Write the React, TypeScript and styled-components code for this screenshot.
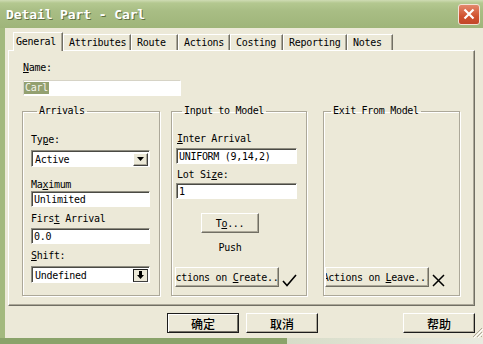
import React from "react";
import styled, { createGlobalStyle } from "styled-components";

const GlobalStyle = createGlobalStyle`
  html, body {
    margin: 0;
    padding: 0;
    background: #ece9d8;
  }
  body {
    font-family: "DejaVu Sans Mono", "Liberation Mono", monospace;
    font-size: 10px;
    letter-spacing: -0.3px;
    color: #000;
  }
`;

const Window = styled.div`
  width: 483px;
  height: 344px;
  display: flex;
  flex-direction: column;
  overflow: hidden;
  background: #a3b97e;
`;

const TitleBar = styled.div`
  height: 28px;
  flex: none;
  display: flex;
  align-items: center;
  justify-content: space-between;
  padding: 0 3px 0 6px;
  box-sizing: border-box;
  background: linear-gradient(
    to bottom,
    #cfdcb4 0,
    #b4c890 3px,
    #a8bd84 40%,
    #9fb57a 100%
  );
`;

const TitleText = styled.span`
  color: #fff;
  font-weight: bold;
  font-size: 13px;
  letter-spacing: -0.1px;
  text-shadow: 1px 1px 0 #5f7040;
`;

const CloseButton = styled.div`
  width: 22px;
  height: 21px;
  box-sizing: border-box;
  border: 1px solid #f3e2d6;
  border-radius: 3px;
  background: linear-gradient(to bottom, #e3886c, #d0522f 60%, #c2472a);
  display: flex;
  align-items: center;
  justify-content: center;
`;

const Body = styled.div`
  flex: 1;
  margin-left: 5px;
  background: #ece9d8;
  display: flex;
  flex-direction: column;
  padding: 4px 8px 0 3px;
  position: relative;
`;

const BottomEdge = styled.div`
  height: 6px;
  flex: none;
  background: linear-gradient(
    to right,
    #8aa36a 0,
    #8aa36a 287px,
    #d7dcc8 287px,
    #e9ebe0 100%
  );
`;

const TabStrip = styled.div`
  display: flex;
  align-items: flex-end;
  height: 18px;
  padding-left: 5px;
  position: relative;
  z-index: 1;
`;

const Tab = styled.div<{ $w: number; $active?: boolean }>`
  width: ${(p) => p.$w}px;
  height: ${(p) => (p.$active ? 19 : 16)}px;
  margin-bottom: ${(p) => (p.$active ? -1 : 0)}px;
  box-sizing: border-box;
  background: #ece9d8;
  border-top: 1px solid #fff;
  border-left: 1px solid #fff;
  border-right: 1px solid #716f64;
  box-shadow: inset -1px 0 #aca899;
  display: flex;
  align-items: center;
  padding-left: ${(p) => (p.$active ? 2 : 5)}px;
  padding-bottom: ${(p) => (p.$active ? 1 : 0)}px;
  white-space: nowrap;
`;

const Panel = styled.div`
  height: 256px;
  box-sizing: border-box;
  border-top: 1px solid #fff;
  border-left: 1px solid #fff;
  border-right: 1px solid #716f64;
  border-bottom: 1px solid #716f64;
  box-shadow: inset -1px -1px #aca899;
  padding: 11px 0 0 14px;
  display: flex;
  flex-direction: column;
`;

const FieldLabel = styled.div<{ $mt?: number; $ml?: number }>`
  margin-top: ${(p) => p.$mt ?? 0}px;
  margin-left: ${(p) => p.$ml ?? 0}px;
  height: 12px;
  line-height: 12px;
  white-space: nowrap;
`;

const TextBox = styled.div<{ $mt?: number; $w: number; $soft?: boolean }>`
  margin-top: ${(p) => p.$mt ?? 0}px;
  width: ${(p) => p.$w}px;
  height: 16px;
  box-sizing: border-box;
  background: #fff;
  border-top: 1px solid ${(p) => (p.$soft ? "#d6d3c6" : "#8e8c80")};
  border-left: 1px solid ${(p) => (p.$soft ? "#d6d3c6" : "#8e8c80")};
  border-bottom: 1px solid #fff;
  border-right: 1px solid #fff;
  box-shadow: ${(p) => (p.$soft ? "none" : "inset 1px 1px #4a4a44")};
  display: flex;
  align-items: center;
  padding-left: ${(p) => (p.$soft ? 0 : 2)}px;
  white-space: nowrap;
`;

const Selected = styled.span`
  background: #93a070;
  color: #f4f4ec;
  line-height: 12px;
  padding: 0 1px;
`;

const Combo = styled.div<{ $mt: number }>`
  margin-top: ${(p) => p.$mt}px;
  width: 119px;
  height: 17px;
  box-sizing: border-box;
  background: #fff;
  border-top: 1px solid #8e8c80;
  border-left: 1px solid #8e8c80;
  border-bottom: 1px solid #fff;
  border-right: 1px solid #fff;
  box-shadow: inset 1px 1px #4a4a44;
  display: flex;
  align-items: center;
  padding: 1px 1px 0 3px;
`;

const ComboText = styled.span`
  flex: 1;
`;

const ComboArrow = styled.div<{ $bold?: boolean }>`
  width: 15px;
  height: 13px;
  box-sizing: border-box;
  background: #ece9d8;
  border: 1px solid ${(p) => (p.$bold ? "#1a1a1a" : "#fff")};
  border-right-color: #404040;
  border-bottom-color: #404040;
  box-shadow: ${(p) => (p.$bold ? "none" : "inset -1px -1px #aca899")};
  display: flex;
  align-items: center;
  justify-content: center;
`;

const GroupRow = styled.div`
  display: flex;
  margin-top: 9px;
  margin-left: -1px;
`;

const Group = styled.fieldset<{ $w: number; $ml?: number; $pl: number }>`
  width: ${(p) => p.$w}px;
  height: 191px;
  box-sizing: border-box;
  margin: 0 0 0 ${(p) => p.$ml ?? 0}px;
  padding: 0 0 0 ${(p) => p.$pl}px;
  min-width: 0;
  border: 1px solid #aca899;
  box-shadow: inset 1px 1px #fff, 1px 1px #fff;
  display: flex;
  flex-direction: column;
`;

const Caption = styled.legend`
  margin-left: 6px;
  padding: 0 2px;
  height: 12px;
  line-height: 12px;
`;

const PushButton = styled.div<{ $mt?: number; $ml?: number; $w: number }>`
  margin-top: ${(p) => p.$mt ?? 0}px;
  margin-left: ${(p) => p.$ml ?? 0}px;
  width: ${(p) => p.$w}px;
  height: 20px;
  flex: none;
  box-sizing: border-box;
  background: #ece9d8;
  border-top: 1px solid #fff;
  border-left: 1px solid #fff;
  border-right: 1px solid #716f64;
  border-bottom: 1px solid #716f64;
  box-shadow: inset -1px -1px #aca899;
  display: flex;
  align-items: center;
  justify-content: center;
  overflow: hidden;
  white-space: nowrap;
`;

const ButtonCaption = styled.span`
  flex: none;
  white-space: pre;
`;

const Centered = styled.div<{ $mt: number; $ml: number; $w: number }>`
  margin-top: ${(p) => p.$mt}px;
  margin-left: ${(p) => p.$ml}px;
  width: ${(p) => p.$w}px;
  height: 12px;
  line-height: 12px;
  text-align: center;
`;

const ButtonLine = styled.div<{ $mt: number; $ml: number }>`
  margin-top: ${(p) => p.$mt}px;
  margin-left: ${(p) => p.$ml}px;
  display: flex;
  align-items: flex-end;
  gap: 3px;
`;

const DialogButtons = styled.div`
  display: flex;
  margin-top: 7px;
  padding-left: 159px;
  gap: 7px;
`;

const DialogButton = styled.div<{ $default?: boolean; $push?: boolean }>`
  width: 72px;
  height: 20px;
  box-sizing: border-box;
  margin-left: ${(p) => (p.$push ? "auto" : "0")};
  background: #ece9d8;
  border: 1px solid ${(p) => (p.$default ? "#1c1c1c" : "#fff")};
  border-right-color: #1c1c1c;
  border-bottom-color: #1c1c1c;
  box-shadow: ${(p) =>
    p.$default
      ? "inset 1px 1px #fff, inset -1px -1px #716f64"
      : "inset -1px -1px #aca899"};
  display: flex;
  align-items: center;
  justify-content: center;
  font-family: "Noto Sans CJK SC", sans-serif;
  font-size: 12px;
  font-weight: 500;
  letter-spacing: 0;
`;

const Grip = styled.svg`
  position: absolute;
  right: 0;
  bottom: 0;
`;

const Check = () => (
  <svg width="15" height="13" viewBox="0 0 15 13">
    <polyline points="1,7 5,11.5 14,1" fill="none" stroke="#000" strokeWidth="1.6" />
  </svg>
);

const Cross = () => (
  <svg width="13" height="13" viewBox="0 0 13 13">
    <path d="M1 1 L12 12 M12 1 L1 12" stroke="#000" strokeWidth="1.5" />
  </svg>
);

const SmallArrow = () => (
  <svg width="7" height="4" viewBox="0 0 7 4">
    <polygon points="0,0 7,0 3.5,4" fill="#000" />
  </svg>
);

const BoldArrow = () => (
  <svg width="7" height="8" viewBox="0 0 7 8">
    <rect x="2" y="0" width="3" height="4" fill="#000" />
    <polygon points="0,4 7,4 3.5,8" fill="#000" />
  </svg>
);

const tabs: [string, number][] = [
  ["General", 50],
  ["Attributes", 68],
  ["Route", 47],
  ["Actions", 52],
  ["Costing", 53],
  ["Reporting", 64],
  ["Notes", 46],
];

export default function App() {
  return (
    <>
      <GlobalStyle />
      <Window>
        <TitleBar>
          <TitleText>Detail Part - Carl</TitleText>
          <CloseButton>
            <svg width="12" height="12" viewBox="0 0 12 12">
              <path d="M1.5 1.5 L10.5 10.5 M10.5 1.5 L1.5 10.5" stroke="#fff" strokeWidth="2.2" />
            </svg>
          </CloseButton>
        </TitleBar>
        <Body>
          <TabStrip>
            {tabs.map(([label, w], i) => (
              <Tab key={label} $w={w} $active={i === 0}>
                {label}
              </Tab>
            ))}
          </TabStrip>
          <Panel>
            <FieldLabel>
              <u>N</u>ame:
            </FieldLabel>
            <TextBox $mt={6} $w={158} $soft>
              <Selected>Carl</Selected>
            </TextBox>
            <GroupRow>
              <Group $w={138} $pl={8}>
                <Caption>Arrivals</Caption>
                <FieldLabel $mt={17}>
                  Ty<u>p</u>e:
                </FieldLabel>
                <Combo $mt={4}>
                  <ComboText>Active</ComboText>
                  <ComboArrow>
                    <SmallArrow />
                  </ComboArrow>
                </Combo>
                <FieldLabel $mt={12}>
                  Ma<u>x</u>imum
                </FieldLabel>
                <TextBox $w={119}>Unlimited</TextBox>
                <FieldLabel $mt={6}>
                  Firs<u>t</u> Arrival
                </FieldLabel>
                <TextBox $mt={3} $w={119}>
                  0.0
                </TextBox>
                <FieldLabel $mt={6}>
                  <u>S</u>hift:
                </FieldLabel>
                <Combo $mt={4}>
                  <ComboText>Undefined</ComboText>
                  <ComboArrow $bold>
                    <BoldArrow />
                  </ComboArrow>
                </Combo>
              </Group>
              <Group $w={136} $ml={11} $pl={4}>
                <Caption>Input to Model</Caption>
                <FieldLabel $mt={16} $ml={1}>
                  <u>I</u>nter Arrival
                </FieldLabel>
                <TextBox $mt={3} $w={121}>
                  UNIFORM (9,14,2)
                </TextBox>
                <FieldLabel $mt={5} $ml={1}>
                  Lot Si<u>z</u>e:
                </FieldLabel>
                <TextBox $mt={2} $w={121}>
                  1
                </TextBox>
                <PushButton $mt={14} $ml={25} $w={58}>
                  <ButtonCaption>
                    T<u>o</u>...
                  </ButtonCaption>
                </PushButton>
                <Centered $mt={9} $ml={25} $w={58}>
                  Push
                </Centered>
                <ButtonLine $mt={13} $ml={-1}>
                  <PushButton $w={104}>
                    <ButtonCaption>
                      Actions on <u>C</u>reate...
                    </ButtonCaption>
                  </PushButton>
                  <Check />
                </ButtonLine>
              </Group>
              <Group $w={137} $ml={16} $pl={1}>
                <Caption>Exit From Model</Caption>
                <ButtonLine $mt={150} $ml={0}>
                  <PushButton $w={104}>
                    <ButtonCaption>
                      Actions on <u>L</u>eave...
                    </ButtonCaption>
                  </PushButton>
                  <Cross />
                </ButtonLine>
              </Group>
            </GroupRow>
          </Panel>
          <DialogButtons>
            <DialogButton $default>确定</DialogButton>
            <DialogButton>取消</DialogButton>
            <DialogButton $push>帮助</DialogButton>
          </DialogButtons>
          <Grip width="12" height="12" viewBox="0 0 12 12">
            <path d="M11 2 L2 11 M11 6 L6 11 M11 10 L10 11" stroke="#aca899" strokeWidth="1" />
            <path d="M12 3 L3 12 M12 7 L7 12" stroke="#fff" strokeWidth="1" />
          </Grip>
        </Body>
        <BottomEdge />
      </Window>
    </>
  );
}
